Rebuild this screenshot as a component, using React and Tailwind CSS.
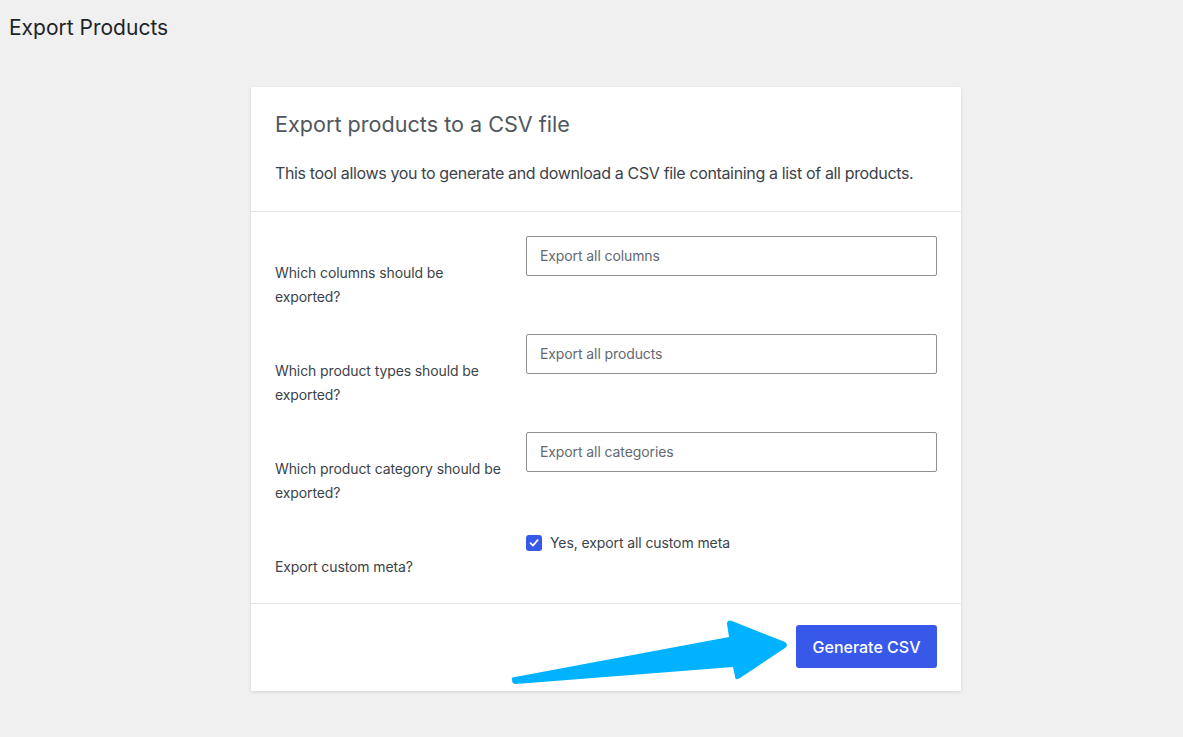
import React from 'react';

const rows = [
  { label: 'Which columns should be exported?', placeholder: 'Export all columns' },
  { label: 'Which product types should be exported?', placeholder: 'Export all products' },
  { label: 'Which product category should be exported?', placeholder: 'Export all categories' },
];

const App = () => {
  return (
    <div className="relative min-h-[737px] bg-[#f0f0f1] font-['Inter',sans-serif] overflow-hidden">
      <h1 className="pl-[9px] pt-[14px] text-[21px] leading-7 text-[#1d2327]">Export Products</h1>

      <div className="ml-[251px] mt-[45px] w-[710px] bg-white shadow-[0_1px_3px_rgba(0,0,0,0.12)]">
        {/* Header */}
        <div className="px-6 pt-[23px] pb-[26px] border-b border-[#e6e6e6]">
          <h2 className="text-[21.6px] leading-7 text-[#50575e]">Export products to a CSV file</h2>
          <p className="mt-[23px] text-base leading-6 tracking-[-0.35px] whitespace-nowrap text-[#3c434a]">
            This tool allows you to generate and download a CSV file containing a list of all products.
          </p>
        </div>

        {/* Form */}
        <div className="px-6 pt-6 pb-[24px] flex flex-col gap-[25px] border-b border-[#e6e6e6]">
          {rows.map((row) => (
            <div key={row.placeholder} className="flex">
              <div className="w-[251px] pt-[25px] pr-4 text-sm leading-6 tracking-[-0.1px] text-[#3c434a]">{row.label}</div>
              <div className="w-[411px] h-10 border border-[#8c8f94] rounded-[2px] px-[13px] flex items-center text-sm tracking-[-0.1px] text-[#646970]">
                {row.placeholder}
              </div>
            </div>
          ))}
          <div className="flex">
            <div className="w-[251px] pt-[25px] text-sm leading-6 tracking-[-0.1px] text-[#3c434a]">Export custom meta?</div>
            <label className="flex items-center gap-2 h-4 mt-[5px] text-sm tracking-[-0.1px] text-[#3c434a]">
              <span className="w-4 h-4 rounded-[3px] bg-[#3858e9] flex items-center justify-center">
                <svg width="12" height="12" viewBox="0 0 12 12" fill="none">
                  <path d="M2.5 6.2 L5 8.6 L9.6 3.2" stroke="white" strokeWidth="1.8" strokeLinecap="round" strokeLinejoin="round" />
                </svg>
              </span>
              Yes, export all custom meta
            </label>
          </div>
        </div>

        {/* Footer */}
        <div className="px-6 pt-[21px] pb-[23px] flex justify-end">
          <button className="h-[43px] w-[141px] rounded-[3px] bg-[#3858e9] text-white text-base font-medium">
            Generate CSV
          </button>
        </div>
      </div>

      {/* Arrow annotation */}
      <svg className="absolute left-0 top-0 pointer-events-none" width="1183" height="737" viewBox="0 0 1183 737">
        <path
          d="M512,680 Q511,677 515,677 L729,637 L727,624 Q727,619 732,621 L785,642 Q789,645 785,648 L740,678 Q735,681 735,676 L733,667 L516,684 Q512,684 512,680 Z"
          fill="#00b2ff"
        />
      </svg>
    </div>
  );
};

export default App;
